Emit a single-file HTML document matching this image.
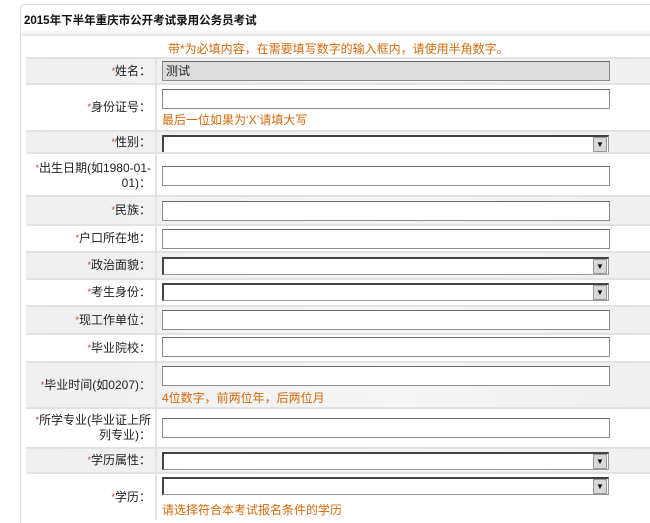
<!DOCTYPE html>
<html><head><meta charset="utf-8">
<style>
*{margin:0;padding:0;box-sizing:border-box}
html,body{width:650px;height:523px;overflow:hidden}
body{background:#fff;position:relative;font-family:"Liberation Sans","Noto Sans CJK SC","WenQuanYi Zen Hei",sans-serif;font-size:12px;color:#222}
.box{position:absolute;left:20px;top:4px;width:630px;height:519px;border:1px solid #d8d8d8;border-bottom:none;border-right:none;border-radius:5px 0 0 0}
.title{position:absolute;left:24px;top:12px;font-size:11.5px;font-weight:bold;color:#111}
.bar{position:absolute;left:22px;top:30px;width:628px;height:6px;background:linear-gradient(#fff,#e4e4e4)}
.note{position:absolute;left:168px;top:40px;color:#d46a0a;font-size:12px}
.row{position:absolute;left:26px;width:624px;border-top:2px solid #e2e2e2}
.g{background:linear-gradient(90deg,#efefef,#f5f5f5 60%,#efefef)}
.lab{position:absolute;left:0;width:131px;top:0;bottom:0;display:flex;align-items:center;justify-content:flex-end;text-align:right;border-right:2px solid #e2e2e2;line-height:15px;padding-right:4px}
.lab span{color:#c0392b;font-size:9px;vertical-align:top}
.in{position:absolute;left:136px;width:448px;height:20px;border:1px solid #8c8c8c;border-top-color:#6a6a6a;background:#fff}
.sel{position:absolute;left:136px;width:447px;height:18px;border:1px solid #999;border-top:2px solid #444;border-left:2px solid #444;background:#fff}
.sel i{position:absolute;right:1px;top:0;width:14px;height:15px;background:#d8d8d8;border:1px solid #999;font-style:normal;font-size:8px;line-height:14px;text-align:center;color:#111}
.hint{position:absolute;left:136px;color:#d46a0a;font-size:12px}
</style></head><body>
<div class="box"></div>
<div class="title">2015年下半年重庆市公开考试录用公务员考试</div>
<div class="bar"></div>
<div class="note">带*为必填内容，在需要填写数字的输入框内，请使用半角数字。</div>

<div class="row g" style="top:57px;height:26px"><div class="lab"><span>*</span>姓名：</div><div class="in" style="top:2px;background:#dcdcdc;padding-left:3px;line-height:18px">测试</div></div>
<div class="row" style="top:83px;height:47px"><div class="lab"><span>*</span>身份证号：</div><div class="in" style="top:4px"></div><div class="hint" style="top:26px">最后一位如果为‘X’请填大写</div></div>
<div class="row g" style="top:130px;height:22px"><div class="lab"><span>*</span>性别：</div><div class="sel" style="top:3px"><i>▼</i></div></div>
<div class="row" style="top:152px;height:43px"><div class="lab" style="padding-top:2px"><div><span>*</span>出生日期(如1980-01-<br>01)：</div></div><div class="in" style="top:12px"></div></div>
<div class="row g" style="top:195px;height:29px"><div class="lab"><span>*</span>民族：</div><div class="in" style="top:4px"></div></div>
<div class="row" style="top:224px;height:27px"><div class="lab"><span>*</span>户口所在地：</div><div class="in" style="top:3px"></div></div>
<div class="row g" style="top:251px;height:27px"><div class="lab"><span>*</span>政治面貌：</div><div class="sel" style="top:4px"><i>▼</i></div></div>
<div class="row" style="top:278px;height:27px"><div class="lab"><span>*</span>考生身份：</div><div class="sel" style="top:3px"><i>▼</i></div></div>
<div class="row g" style="top:305px;height:28px"><div class="lab"><span>*</span>现工作单位：</div><div class="in" style="top:3px"></div></div>
<div class="row" style="top:333px;height:28px"><div class="lab"><span>*</span>毕业院校：</div><div class="in" style="top:2px"></div></div>
<div class="row g" style="top:361px;height:46px"><div class="lab"><span>*</span>毕业时间(如0207)：</div><div class="in" style="top:3px"></div><div class="hint" style="top:26px">4位数字，前两位年，后两位月</div></div>
<div class="row" style="top:407px;height:40px"><div class="lab"><div><span>*</span>所学专业(毕业证上所<br>列专业)：</div></div><div class="in" style="top:9px"></div></div>
<div class="row g" style="top:447px;height:25px"><div class="lab"><span>*</span>学历属性：</div><div class="sel" style="top:3px"><i>▼</i></div></div>
<div class="row" style="top:472px;height:51px"><div class="lab" style="height:46px;bottom:auto"><span>*</span>学历：</div><div class="sel" style="top:3px"><i>▼</i></div><div class="hint" style="top:27px">请选择符合本考试报名条件的学历</div></div>
</body></html>
